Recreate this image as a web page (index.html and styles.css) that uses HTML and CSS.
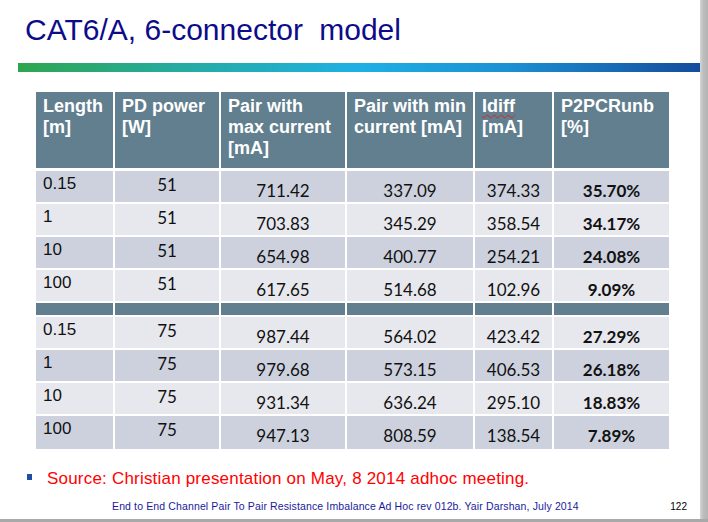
FILE: index.html
```html
<!DOCTYPE html>
<html>
<head>
<meta charset="utf-8">
<link rel="stylesheet" href="styles.css">
</head>
<body>
<div class="screen">
  <div class="row">
    <div class="slide">
      <h1 class="title">CAT6/A, 6-connector <span class="title-last">model</span></h1>
      <div class="bar"></div>
      <table class="data">
        <colgroup>
          <col class="c1"><col class="c2"><col class="c3"><col class="c4"><col class="c5"><col class="c6">
        </colgroup>
        <thead>
          <tr class="head">
            <th>Length<br>[m]</th>
            <th>PD power<br>[W]</th>
            <th>Pair with<br>max current<br>[mA]</th>
            <th>Pair with min<br>current [mA]</th>
            <th><span class="spell">Idiff</span><br>[mA]</th>
            <th>P2PCRunb<br>[%]</th>
          </tr>
        </thead>
        <tbody>
          <tr class="dark"><td class="len">0.15</td><td class="pw">51</td><td>711.42</td><td>337.09</td><td>374.33</td><td class="pct">35.70%</td></tr>
          <tr class="light"><td class="len">1</td><td class="pw">51</td><td>703.83</td><td>345.29</td><td>358.54</td><td class="pct">34.17%</td></tr>
          <tr class="dark"><td class="len">10</td><td class="pw">51</td><td>654.98</td><td>400.77</td><td>254.21</td><td class="pct">24.08%</td></tr>
          <tr class="light"><td class="len">100</td><td class="pw">51</td><td>617.65</td><td>514.68</td><td>102.96</td><td class="pct">9.09%</td></tr>
          <tr class="sep"><td></td><td></td><td></td><td></td><td></td><td></td></tr>
          <tr class="light"><td class="len">0.15</td><td class="pw">75</td><td>987.44</td><td>564.02</td><td>423.42</td><td class="pct">27.29%</td></tr>
          <tr class="dark"><td class="len">1</td><td class="pw">75</td><td>979.68</td><td>573.15</td><td>406.53</td><td class="pct">26.18%</td></tr>
          <tr class="light"><td class="len">10</td><td class="pw">75</td><td>931.34</td><td>636.24</td><td>295.10</td><td class="pct">18.83%</td></tr>
          <tr class="dark last"><td class="len">100</td><td class="pw">75</td><td>947.13</td><td>808.59</td><td>138.54</td><td class="pct">7.89%</td></tr>
        </tbody>
      </table>
      <div class="source">
        <span class="bullet"></span>
        <span class="source-text">Source: Christian presentation on May, 8 2014 adhoc meeting.</span>
      </div>
      <div class="footer">
        <span class="foot-text">End to End Channel Pair To Pair Resistance Imbalance Ad Hoc rev 012b. Yair Darshan, July 2014</span>
        <span class="page-num">122</span>
      </div>
    </div>
    <div class="edge-right"></div>
  </div>
  <div class="edge-bottom"></div>
</div>
</body>
</html>
```

FILE: styles.css
```css
html, body {
  margin: 0;
  padding: 0;
  background: #ffffff;
}

.screen {
  width: 708px;
  height: 522px;
  overflow: hidden;
  display: flex;
  flex-direction: column;
}

.row {
  display: flex;
  height: 519px;
}

.slide {
  width: 700px;
  height: 519px;
  background: #ffffff;
  display: flex;
  flex-direction: column;
  font-family: "Liberation Sans", Arial, sans-serif;
}

.edge-right {
  width: 8px;
  background: linear-gradient(to right, #d6d6d6, #bdbdbd 40%, #b4b4b4);
}

.edge-bottom {
  height: 3px;
  background: #a9a9a9;
}

.title {
  margin: 13px 0 0 25px;
  font-size: 30px;
  line-height: 34px;
  font-weight: normal;
  color: #0c0c8a;
}

.title-last {
  margin-left: 8px;
}

.bar {
  margin: 16px 0 0 18px;
  width: 682px;
  height: 9px;
  background: linear-gradient(to right, #2ea64e 0%, #25ab9c 22%, #1eb0e4 50%, #1b90d2 72%, #154c9c 100%);
}

.data {
  margin: 20px 0 0 36px;
  width: 633px;
  table-layout: fixed;
  border-collapse: separate;
  border-spacing: 0;
}

.c1 { width: 79px; }
.c2 { width: 106px; }
.c3 { width: 126px; }
.c4 { width: 128px; }
.c5 { width: 79px; }
.c6 { width: 115px; }

.data th, .data td {
  box-sizing: border-box;
  border-right: 2px solid #ffffff;
  border-bottom: 2px solid #ffffff;
  padding: 0;
}

.data th:last-child, .data td:last-child {
  border-right: none;
}

.head {
  height: 79px;
}

.head th {
  background: #627f8f;
  color: #ffffff;
  font-size: 18px;
  line-height: 21px;
  font-weight: bold;
  text-align: left;
  vertical-align: top;
  padding: 4px 4px 0 7px;
  border-bottom-width: 3px;
}

.spell {
  text-decoration: underline wavy #e02020;
  text-decoration-thickness: 1px;
  text-underline-offset: 2px;
}

.data tbody tr {
  height: 33px;
}

.data tbody tr.sep {
  height: 14px;
}

.data tbody tr.last td {
  border-bottom: none;
}

.dark td { background: #cdd1de; }
.light td { background: #e7e8ee; }
.sep td { background: #627f8f; }

.data td {
  vertical-align: top;
  text-align: center;
  font-family: Lato, "Liberation Sans", sans-serif;
  font-size: 17px;
  line-height: 20px;
  color: #111111;
  padding-top: 10px;
}

.data td.len {
  text-align: left;
  font-family: "Liberation Sans", Arial, sans-serif;
  padding: 3px 0 0 7px;
}

.data td.pw {
  padding-top: 4px;
}

.data td.pct {
  font-weight: bold;
}

.source {
  display: flex;
  align-items: flex-start;
  margin: 20px 0 0 27px;
}

.bullet {
  width: 5px;
  height: 6px;
  background: #1f4fa0;
  margin: 5px 15px 0 0;
}

.source-text {
  color: #ff0000;
  font-size: 17px;
  line-height: 20px;
  letter-spacing: 0.2px;
}

.footer {
  display: flex;
  justify-content: space-between;
  align-items: baseline;
  margin: 10px 13px 0 112px;
}

.foot-text {
  color: #1a1a9c;
  font-size: 10.5px;
  line-height: 14px;
  letter-spacing: 0.13px;
}

.page-num {
  color: #000000;
  font-size: 10px;
  line-height: 14px;
}
```
